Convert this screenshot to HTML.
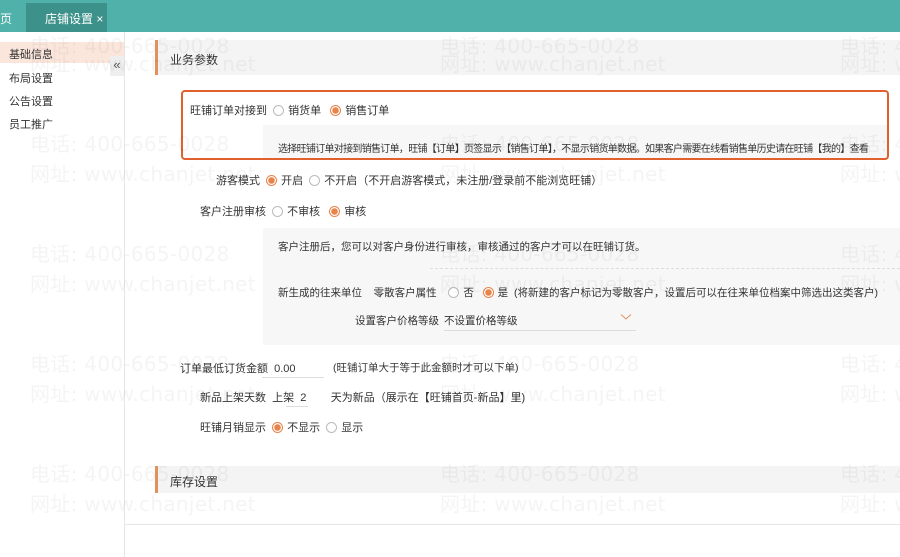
<!DOCTYPE html>
<html><head><meta charset="utf-8"><style>
*{margin:0;padding:0;box-sizing:border-box}
body{width:900px;height:557px;overflow:hidden;background:#fff;font-family:"Liberation Sans","Noto Sans CJK SC",sans-serif;font-size:11px;color:#333;position:relative}
.a{position:absolute;white-space:nowrap}
.r{display:inline-block;width:11px;height:11px;border:1px solid #bbb;border-radius:50%;vertical-align:-2px;margin-right:4px;background:#fff}
.r.on{border-color:#e8834a;background:radial-gradient(circle,#e8834a 0 3px,#fff 3.5px)}
.wm{position:absolute;white-space:nowrap;color:rgba(0,0,0,0.045);font-size:20px;letter-spacing:0.3px;font-family:"DejaVu Sans","Noto Sans CJK SC",sans-serif;pointer-events:none}
</style></head><body>
<div class="a" style="left:0;top:0;width:900px;height:32px;background:#4fb1aa"></div>
<div class="a" style="left:26px;top:3px;width:81px;height:29px;background:#3d918b"></div>
<div class="a" style="left:0;top:10px;color:#fff;font-size:12px">页</div>
<div class="a" style="left:45px;top:10px;color:#fff;font-size:12px">店铺设置 <span style="font-size:12px">×</span></div>

<div class="a" style="left:124px;top:32px;width:1px;height:525px;background:#e6e6e6"></div>
<div class="a" style="left:0;top:42px;width:124px;height:21px;background:#fbe6dc"></div>
<div class="a" style="left:9px;top:46px">基础信息</div>
<div class="a" style="left:9px;top:70px">布局设置</div>
<div class="a" style="left:9px;top:93px">公告设置</div>
<div class="a" style="left:9px;top:116px">员工推广</div>
<div class="a" style="left:110px;top:56px;width:14px;height:20px;background:#eee;text-align:center;line-height:18px;font-size:13px;color:#555">«</div>

<div class="a" style="left:155px;top:40px;width:745px;height:35px;background:#f4f4f4;border-left:3px solid #e0915c"></div>
<div class="a" style="left:170px;top:51px;font-size:12px">业务参数</div>

<div class="a" style="left:263px;top:125px;width:625px;height:35px;background:#f7f7f7"></div>
<div class="a" style="left:181px;top:90px;width:708px;height:70px;border:2px solid #e0602e;border-radius:4px"></div>
<div class="a" style="left:190px;top:102px">旺铺订单对接到 &nbsp;<span class="r"></span>销货单 &nbsp;&nbsp;<span class="r on"></span>销售订单</div>
<div class="a" style="left:278px;top:140px;font-size:10px;letter-spacing:-0.7px">选择旺铺订单对接到销售订单，旺铺【订单】页签显示【销售订单】，不显示销货单数据。如果客户需要在线看销售单历史请在旺铺【我的】查看</div>

<div class="a" style="left:216px;top:172px">游客模式 &nbsp;<span class="r on"></span>开启 &nbsp;<span class="r"></span>不开启（不开启游客模式，未注册/登录前不能浏览旺铺）</div>
<div class="a" style="left:200px;top:203px">客户注册审核 &nbsp;<span class="r"></span>不审核 &nbsp;&nbsp;<span class="r on"></span>审核</div>

<div class="a" style="left:263px;top:228px;width:637px;height:117px;background:#f7f7f7"></div>
<div class="a" style="left:430px;top:268px;width:470px;border-top:1px dashed #ddd"></div>
<div class="a" style="left:278px;top:239px;font-size:10.5px">客户注册后，您可以对客户身份进行审核，审核通过的客户才可以在旺铺订货。</div>
<div class="a" style="left:278px;top:285px;font-size:10.5px">新生成的往来单位 &nbsp;&nbsp;&nbsp;零散客户属性 &nbsp;&nbsp;&nbsp;<span class="r"></span>否 &nbsp;&nbsp;<span class="r on"></span>是 &nbsp;(将新建的客户标记为零散客户，设置后可以在往来单位档案中筛选出这类客户)</div>
<div class="a" style="left:355px;top:313px;font-size:10.5px">设置客户价格等级</div>
<div class="a" style="left:444px;top:313px;font-size:10.5px">不设置价格等级</div>
<svg class="a" style="left:620px;top:313px" width="12" height="8" viewBox="0 0 12 8"><path d="M1 1.5 L6 6 L11 1.5" fill="none" stroke="#e0915c" stroke-width="1"/></svg>
<div class="a" style="left:444px;top:330px;width:192px;height:1px;background:#ddd"></div>

<div class="a" style="left:180px;top:360px">订单最低订货金额 &nbsp;0.00</div>
<div class="a" style="left:333px;top:360px;font-size:10.5px">(旺铺订单大于等于此金额时才可以下单)</div>
<div class="a" style="left:262px;top:377px;width:62px;height:1px;background:#ddd"></div>
<div class="a" style="left:200px;top:389px">新品上架天数 &nbsp;上架 &nbsp;2 &nbsp;&nbsp;&nbsp;&nbsp;&nbsp;&nbsp;&nbsp;天为新品（展示在【旺铺首页-新品】里)</div>
<div class="a" style="left:286px;top:406px;width:22px;height:1px;background:#ddd"></div>
<div class="a" style="left:200px;top:419px">旺铺月销显示 &nbsp;<span class="r on"></span>不显示 &nbsp;<span class="r"></span>显示</div>

<div class="a" style="left:155px;top:466px;width:745px;height:27px;background:#f4f4f4;border-left:3px solid #e0915c"></div>
<div class="a" style="left:170px;top:473px;font-size:12px">库存设置</div>
<div class="a" style="left:125px;top:524px;width:775px;height:1px;background:#e6e6e6"></div>

<div class="wm" style="left:30px;top:30px">电话: 400-665-0028</div><div class="wm" style="left:440px;top:30px">电话: 400-665-0028</div><div class="wm" style="left:840px;top:30px">电话: 400-665-0028</div>
<div class="wm" style="left:30px;top:48px">网址: www.chanjet.net</div><div class="wm" style="left:440px;top:48px">网址: www.chanjet.net</div><div class="wm" style="left:840px;top:48px">网址: www.chanjet.net</div>
<div class="wm" style="left:30px;top:128px">电话: 400-665-0028</div><div class="wm" style="left:440px;top:128px">电话: 400-665-0028</div><div class="wm" style="left:840px;top:128px">电话: 400-665-0028</div>
<div class="wm" style="left:30px;top:158px">网址: www.chanjet.net</div><div class="wm" style="left:440px;top:158px">网址: www.chanjet.net</div><div class="wm" style="left:840px;top:158px">网址: www.chanjet.net</div>
<div class="wm" style="left:30px;top:238px">电话: 400-665-0028</div><div class="wm" style="left:440px;top:238px">电话: 400-665-0028</div><div class="wm" style="left:840px;top:238px">电话: 400-665-0028</div>
<div class="wm" style="left:30px;top:268px">网址: www.chanjet.net</div><div class="wm" style="left:440px;top:268px">网址: www.chanjet.net</div><div class="wm" style="left:840px;top:268px">网址: www.chanjet.net</div>
<div class="wm" style="left:30px;top:348px">电话: 400-665-0028</div><div class="wm" style="left:440px;top:348px">电话: 400-665-0028</div><div class="wm" style="left:840px;top:348px">电话: 400-665-0028</div>
<div class="wm" style="left:30px;top:378px">网址: www.chanjet.net</div><div class="wm" style="left:440px;top:378px">网址: www.chanjet.net</div><div class="wm" style="left:840px;top:378px">网址: www.chanjet.net</div>
<div class="wm" style="left:30px;top:458px">电话: 400-665-0028</div><div class="wm" style="left:440px;top:458px">电话: 400-665-0028</div><div class="wm" style="left:840px;top:458px">电话: 400-665-0028</div>
<div class="wm" style="left:30px;top:488px">网址: www.chanjet.net</div><div class="wm" style="left:440px;top:488px">网址: www.chanjet.net</div><div class="wm" style="left:840px;top:488px">网址: www.chanjet.net</div>
</body></html>
